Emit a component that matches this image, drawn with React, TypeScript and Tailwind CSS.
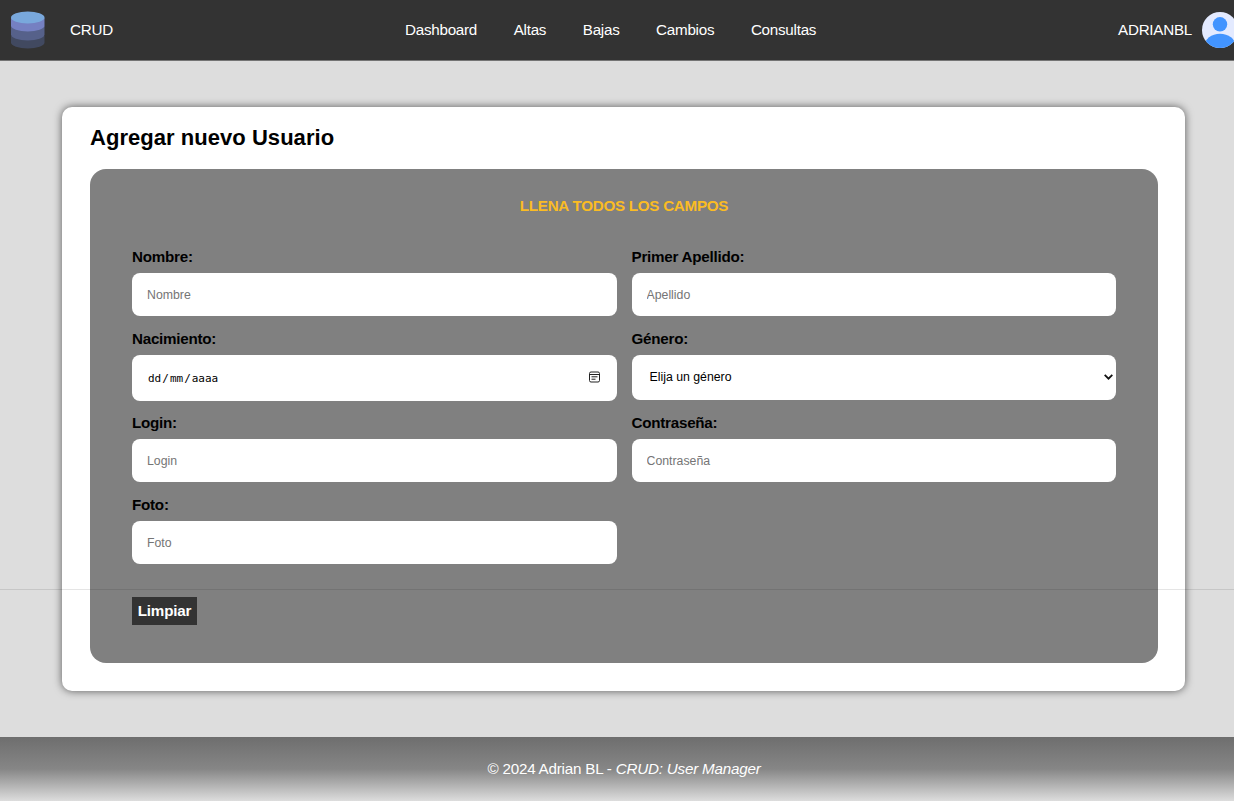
import type { ReactNode } from 'react';

function Field({ label, children }: { label: string; children: ReactNode }) {
  return (
    <label className="flex flex-col">
      <span className="mb-[7px] h-[18px] text-[15.2px] leading-[18px] font-bold tracking-[-0.25px]">{label}</span>
      {children}
    </label>
  );
}

function TextInput({ placeholder, type = 'text' }: { placeholder: string; type?: string }) {
  return (
    <input
      type={type}
      placeholder={placeholder}
      className="h-[43px] w-full rounded-[8px] bg-white px-[15px] text-[12.3px] text-black outline-none placeholder:text-[#757575]"
    />
  );
}

function DatabaseLogo() {
  return (
    <svg width="34" height="38" viewBox="0 0 34 38">
      <path d="M0 25h33.500v6.500a16.750 6 0 0 1-33.500 0z" fill="#414960" />
      <path d="M0 15h33.500v8.500a16.750 6 0 0 1-33.500 0z" fill="#56618a" />
      <path d="M0 7h33.500v7.500a16.750 6 0 0 1-33.500 0z" fill="#7580c2" />
      <ellipse cx="16.750" cy="6.500" rx="16.750" ry="6" fill="#79a8dc" />
    </svg>
  );
}

function Avatar() {
  return (
    <svg width="36" height="36" viewBox="0 0 36 36" className="shrink-0">
      <defs>
        <clipPath id="avatar-circle">
          <circle cx="18" cy="18" r="18" />
        </clipPath>
      </defs>
      <g clipPath="url(#avatar-circle)">
        <rect width="36" height="36" fill="#e3eaff" />
        <circle cx="18" cy="12.300" r="7.200" fill="#4294ff" />
        <ellipse cx="18" cy="34" rx="15.500" ry="12.200" fill="#4294ff" />
      </g>
    </svg>
  );
}

export default function App() {
  return (
    <div className="relative flex h-[801px] w-[1234px] flex-col overflow-hidden bg-[#dddddd] font-['Liberation_Sans',Arial,sans-serif] text-black">
      <header className="flex h-[61px] shrink-0 items-center border-b border-[#747474] bg-[#333333] pl-[11px] text-[15.2px] tracking-[-0.25px] text-white">
        <div className="flex w-[394px] items-center gap-[25px]">
          <DatabaseLogo />
          <span>CRUD</span>
        </div>
        <nav className="flex grow gap-[36.6px]">
          <a>Dashboard</a>
          <a>Altas</a>
          <a>Bajas</a>
          <a>Cambios</a>
          <a>Consultas</a>
        </nav>
        <div className="-mr-[4px] flex items-center gap-[10px]">
          <span>ADRIANBL</span>
          <Avatar />
        </div>
      </header>

      <main className="flex h-[676px] shrink-0 pt-[46px] pr-[49px] pb-[46px] pl-[62px]">
        <section className="flex w-full flex-col rounded-[10px] bg-white pt-[17px] pr-[27px] pb-[28px] pl-[28px] shadow-[0_0_9px_rgba(0,0,0,0.6)]">
          <h1 className="mb-[17px] h-[28px] text-[22px] leading-[28px] font-bold tracking-[0.04px]">Agregar nuevo Usuario</h1>
          <form className="grow rounded-[16px] bg-[#808080] px-[42px] pt-[28px]">
            <h2 className="h-[18px] text-center text-[15.2px] leading-[18px] font-bold tracking-[-0.27px] text-[#fbbc23]">
              LLENA TODOS LOS CAMPOS
            </h2>
            <div className="mt-[33px] grid grid-cols-2 gap-x-[15px]">
              <div className="h-[82px]">
                <Field label="Nombre:"><TextInput placeholder="Nombre" /></Field>
              </div>
              <div className="h-[82px]">
                <Field label="Primer Apellido:"><TextInput placeholder="Apellido" /></Field>
              </div>
              <div className="h-[84px]">
                <Field label="Nacimiento:">
                  <span className="flex h-[46px] items-center justify-between rounded-[8px] bg-white pr-[17px] pl-[16px]">
                    <span className="pt-[2px] font-['DejaVu_Sans_Mono',monospace] text-[11px]">
                      dd<span className="mx-[1px]">/</span>mm<span className="mx-[1px]">/</span>aaaa
                    </span>
                    <svg width="11" height="12" viewBox="0 0 11 12" fill="none" stroke="#222" className="mb-[2px]">
                      <rect x="0.500" y="1" width="10" height="10" rx="1.500" />
                      <path d="M0.500 3.500h10M2.500 5.800h6M2.500 8.200h4" />
                    </svg>
                  </span>
                </Field>
              </div>
              <div className="h-[84px]">
                <Field label="Género:">
                  <span className="flex h-[45px] items-center justify-between rounded-[8px] bg-white pr-[3px] pl-[18px] text-[12.3px]">
                    <span>Elija un género</span>
                    <svg width="9" height="6" viewBox="0 0 9 6" fill="none" stroke="#111" strokeWidth="1.800" className="mb-[1px]">
                      <path d="M0.700 0.900l3.800 3.800l3.800-3.800" />
                    </svg>
                  </span>
                </Field>
              </div>
              <div className="h-[82px]">
                <Field label="Login:"><TextInput placeholder="Login" /></Field>
              </div>
              <div className="h-[82px]">
                <Field label="Contraseña:"><TextInput type="password" placeholder="Contraseña" /></Field>
              </div>
              <div className="h-[68px]">
                <Field label="Foto:"><TextInput placeholder="Foto" /></Field>
              </div>
            </div>
            <button
              type="reset"
              className="mt-[33px] block h-[28px] w-[65px] bg-[#333333] text-center text-[15.2px] leading-[28px] font-bold tracking-[-0.2px] text-white"
            >
              Limpiar
            </button>
          </form>
        </section>
      </main>

      <footer className="h-[64px] shrink-0 bg-[linear-gradient(to_bottom,#6e6e6e_0%,#868686_50%,#dddddd_100%)] pl-[14px] text-center text-[15.2px] leading-[64px] tracking-[-0.21px] text-white">
        © 2024 Adrian BL - <i>CRUD: User Manager</i>
      </footer>

      <div className="pointer-events-none absolute top-[589px] left-0 h-px w-full bg-black/10" />
    </div>
  );
}
